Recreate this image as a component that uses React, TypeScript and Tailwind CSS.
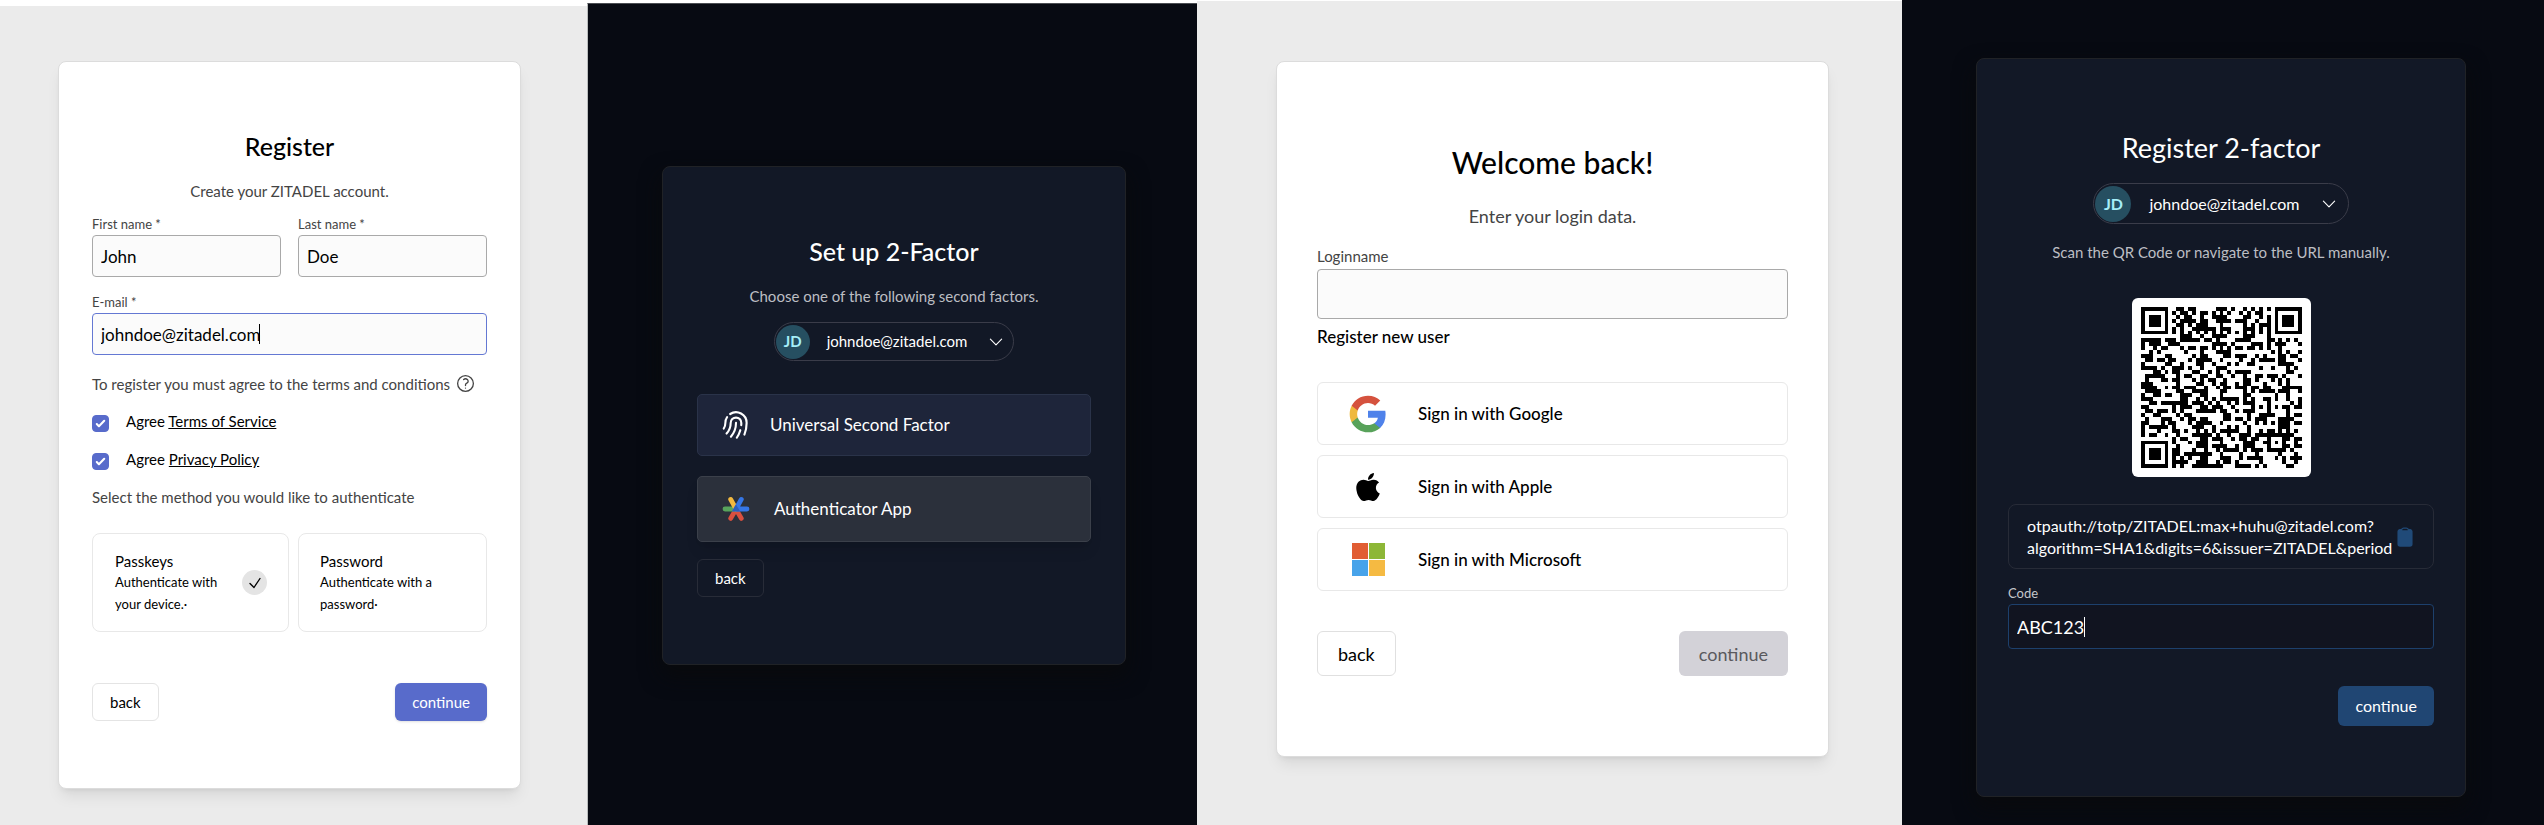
import { useId, useMemo } from "react";
import type { ReactNode } from "react";
import {
  HiClipboard,
  HiOutlineCheck,
  HiOutlineChevronDown,
  HiOutlineFingerPrint,
  HiOutlineQuestionMarkCircle,
} from "react-icons/hi2";
import { FaApple } from "react-icons/fa";

/* ---------- QR code, version 6, error correction level L ---------- */

const QR_SIZE = 41;
const DATA_PER_BLOCK = 68;
const EC_PER_BLOCK = 18;
const FORMAT_BITS = "111110110101010";

function multiply(a: number, b: number): number {
  let z = 0;
  for (let i = 7; i >= 0; i--) {
    z = (z << 1) ^ ((z >>> 7) * 0x11d);
    z ^= ((b >>> i) & 1) * a;
  }
  return z;
}

function errorCorrection(data: number[]): number[] {
  const divisor: number[] = new Array(EC_PER_BLOCK).fill(0);
  divisor[EC_PER_BLOCK - 1] = 1;
  let root = 1;
  for (let i = 0; i < EC_PER_BLOCK; i++) {
    for (let j = 0; j < EC_PER_BLOCK; j++) {
      divisor[j] = multiply(divisor[j], root);
      if (j + 1 < EC_PER_BLOCK) divisor[j] ^= divisor[j + 1];
    }
    root = multiply(root, 2);
  }
  const result: number[] = new Array(EC_PER_BLOCK).fill(0);
  for (const byte of data) {
    const factor = byte ^ (result.shift() as number);
    result.push(0);
    divisor.forEach((d, i) => {
      result[i] ^= multiply(d, factor);
    });
  }
  return result;
}

function encode(text: string): boolean[][] {
  const bits: number[] = [];
  const push = (value: number, length: number) => {
    for (let i = length - 1; i >= 0; i--) bits.push((value >>> i) & 1);
  };
  push(4, 4);
  push(text.length, 8);
  for (const ch of text) push(ch.charCodeAt(0), 8);
  push(0, 4);
  const codewords: number[] = [];
  for (let i = 0; i + 8 <= bits.length; i += 8) {
    codewords.push(parseInt(bits.slice(i, i + 8).join(""), 2));
  }
  for (let pad = 0xec; codewords.length < DATA_PER_BLOCK * 2; pad ^= 0xec ^ 0x11) codewords.push(pad);

  const blocks = [codewords.slice(0, DATA_PER_BLOCK), codewords.slice(DATA_PER_BLOCK, DATA_PER_BLOCK * 2)];
  const corrections = blocks.map(errorCorrection);
  const stream: number[] = [];
  for (let i = 0; i < DATA_PER_BLOCK; i++) blocks.forEach((b) => stream.push(b[i]));
  for (let i = 0; i < EC_PER_BLOCK; i++) corrections.forEach((c) => stream.push(c[i]));

  const modules: boolean[][] = Array.from({ length: QR_SIZE }, () => new Array(QR_SIZE).fill(false));
  const reserved: boolean[][] = Array.from({ length: QR_SIZE }, () => new Array(QR_SIZE).fill(false));
  const set = (x: number, y: number, dark: boolean) => {
    if (x < 0 || y < 0 || x >= QR_SIZE || y >= QR_SIZE) return;
    modules[y][x] = dark;
    reserved[y][x] = true;
  };
  for (let i = 0; i < QR_SIZE; i++) {
    set(6, i, i % 2 === 0);
    set(i, 6, i % 2 === 0);
  }
  for (const [cx, cy] of [[3, 3], [QR_SIZE - 4, 3], [3, QR_SIZE - 4]]) {
    for (let dy = -4; dy <= 4; dy++) {
      for (let dx = -4; dx <= 4; dx++) {
        const d = Math.max(Math.abs(dx), Math.abs(dy));
        set(cx + dx, cy + dy, d !== 2 && d !== 4);
      }
    }
  }
  for (let dy = -2; dy <= 2; dy++) {
    for (let dx = -2; dx <= 2; dx++) set(34 + dx, 34 + dy, Math.max(Math.abs(dx), Math.abs(dy)) !== 1);
  }
  const f = (i: number) => FORMAT_BITS[14 - i] === "1";
  for (let i = 0; i <= 5; i++) set(8, i, f(i));
  set(8, 7, f(6));
  set(8, 8, f(7));
  set(7, 8, f(8));
  for (let i = 9; i < 15; i++) set(14 - i, 8, f(i));
  for (let i = 0; i < 8; i++) set(QR_SIZE - 1 - i, 8, f(i));
  for (let i = 8; i < 15; i++) set(8, QR_SIZE - 15 + i, f(i));
  set(8, QR_SIZE - 8, true);

  let index = 0;
  for (let right = QR_SIZE - 1; right >= 1; right -= 2) {
    if (right === 6) right = 5;
    for (let v = 0; v < QR_SIZE; v++) {
      for (let j = 0; j < 2; j++) {
        const x = right - j;
        const upward = ((right + 1) & 2) === 0;
        const y = upward ? QR_SIZE - 1 - v : v;
        if (reserved[y][x]) continue;
        const bit = index < stream.length * 8 ? (stream[index >>> 3] >>> (7 - (index & 7))) & 1 : 0;
        index++;
        modules[y][x] = (bit === 1) !== (x % 3 === 0);
      }
    }
  }
  return modules;
}

function QrCode({ value }: { value: string }) {
  const path = useMemo(
    () =>
      encode(value)
        .map((row, y) => row.map((dark, x) => (dark ? `M${x} ${y}h1v1h-1z` : "")).join(""))
        .join(""),
    [value],
  );
  return (
    <svg viewBox="0 0 41 41" shapeRendering="crispEdges" role="img" aria-label="QR code" className="block w-full">
      <path d={path} fill="#000" />
    </svg>
  );
}

/* ---------- Logos ---------- */

function GoogleLogo() {
  return (
    <svg viewBox="0 0 24 24" className="size-10" aria-hidden="true">
      <path fill="#4f82ea" d="M22.56 12.25c0-.78-.07-1.53-.2-2.25H12v4.26h5.92c-.26 1.37-1.04 2.53-2.21 3.31v2.77h3.57c2.08-1.92 3.28-4.74 3.28-8.09z" />
      <path fill="#58a25a" d="M12 23c2.97 0 5.46-.98 7.28-2.66l-3.57-2.77c-.98.66-2.23 1.06-3.71 1.06-2.86 0-5.29-1.93-6.16-4.53H2.18v2.84C3.99 20.53 7.7 23 12 23z" />
      <path fill="#efb93d" d="M5.84 14.09c-.22-.66-.35-1.36-.35-2.09s.13-1.43.35-2.09V7.07H2.18C1.43 8.55 1 10.22 1 12s.43 3.45 1.18 4.93l2.85-2.22.81-.62z" />
      <path fill="#d5523e" d="M12 5.38c1.62 0 3.06.56 4.21 1.64l3.15-3.15C17.45 2.09 14.97 1 12 1 7.7 1 3.99 3.47 2.18 7.07l3.66 2.84c.87-2.6 3.3-4.53 6.16-4.53z" />
    </svg>
  );
}

function MicrosoftLogo() {
  return (
    <svg viewBox="0 0 33 33" className="size-[33px]" aria-hidden="true">
      <rect width="16" height="16" fill="#e15d33" />
      <rect x="17" width="16" height="16" fill="#8db737" />
      <rect y="17" width="16" height="16" fill="#47a3ea" />
      <rect x="17" y="17" width="16" height="16" fill="#f5ba42" />
    </svg>
  );
}

function AuthenticatorLogo() {
  return (
    <svg viewBox="0 0 28 26" className="h-[26px] w-7" aria-hidden="true" strokeLinecap="round" strokeWidth="4.8">
      <path d="M14 13.2L8.7 22.4M14 13.2L19.3 22.4" stroke="#d9503f" />
      <path d="M14 13H3" stroke="#58a45c" />
      <path d="M14 13L8.7 3.4" stroke="#f3b93f" />
      <path d="M14 13L19.3 3.4M14 13H25" stroke="#3576e6" />
      <path d="M14 8.4L18.2 15.4H9.8Z" fill="#2c5fbd" />
    </svg>
  );
}

/* ---------- Shared pieces ---------- */

function Field({
  label,
  value,
  large,
  dark,
  active,
}: {
  label: string;
  value?: string;
  large?: "md" | "lg";
  dark?: boolean;
  active?: string;
}) {
  const id = useId();
  const labelSize = large === "lg" ? "text-[15px] leading-5" : "text-[13px] leading-4";
  const inputSize =
    large === "lg" ? "h-[50px] text-lg" : large === "md" ? "h-[45px] text-lg" : "h-[42px] text-[17px]";
  const tone = dark ? "bg-[#111420] text-white" : "bg-[#fbfbfb] text-black";
  const border = !active ? "border-[#a9a9a9]" : dark ? "border-[#1d406c]" : "border-[#6478d3]";
  return (
    <div className="flex min-w-0 flex-1 flex-col gap-[3px]">
      <label htmlFor={id} className={`${labelSize} ${dark ? "text-[#c5c7cb]" : "text-[#444]"}`}>
        {label}
      </label>
      <div className="relative">
        <input
          id={id}
          defaultValue={value}
          className={`block w-full rounded-[4px] border px-2 outline-none ${inputSize} ${tone} ${border}`}
        />
        {active && <span className={`absolute top-1/2 h-5 w-px -translate-y-1/2 ${active}`} />}
      </div>
    </div>
  );
}

function AccountPill({ large }: { large?: boolean }) {
  return (
    <button
      type="button"
      className={`flex items-center self-center rounded-full border border-[#3a3c49] pl-px text-white ${
        large ? "mt-[19px] h-[41px] pr-2.5" : "mt-4 h-[39px] pr-2"
      }`}
    >
      <span
        className={`flex items-center justify-center rounded-full bg-[#264f61] font-bold text-[#a5eef8] ${
          large ? "size-9 text-base" : "size-[34px] text-[15px]"
        }`}
      >
        JD
      </span>
      <span className={large ? "mr-5 ml-[18px] text-base" : "mr-5 ml-[17px] text-[15px]"}>johndoe@zitadel.com</span>
      <HiOutlineChevronDown className="size-[18px]" />
    </button>
  );
}

function Terms({ children }: { children: ReactNode }) {
  const id = useId();
  return (
    <div className="flex h-5 items-end gap-[17px]">
      <span className="relative size-[17px]">
        <input
          id={id}
          type="checkbox"
          defaultChecked
          className="peer block size-[17px] appearance-none rounded border border-[#c4c4c4] checked:border-[#586bcb] checked:bg-[#586bcb]"
        />
        <svg
          viewBox="0 0 16 16"
          className="pointer-events-none absolute inset-0 hidden size-[17px] peer-checked:block"
          fill="#fff"
          aria-hidden="true"
        >
          <path d="M12.207 4.793a1 1 0 010 1.414l-5 5a1 1 0 01-1.414 0l-2-2a1 1 0 011.414-1.414L6.5 9.086l4.293-4.293a1 1 0 011.414 0z" />
        </svg>
      </span>
      <label htmlFor={id} className="mb-px text-[15px] leading-5 text-black">
        Agree{" "}
        <a href="#terms" className="underline">
          {children}
        </a>
      </label>
    </div>
  );
}

function ProviderButton({ icon, children }: { icon: ReactNode; children: ReactNode }) {
  return (
    <button
      type="button"
      className="flex h-[63px] items-center rounded-md border border-[#e8e8e8] bg-white pl-7 text-[17px] font-medium text-black"
    >
      <span className="mr-7 flex w-11 justify-center">{icon}</span>
      {children}
    </button>
  );
}

const lightCard =
  "flex flex-col rounded-lg border border-[#dcdcdc] bg-white shadow-[0_10px_15px_-3px_rgba(0,0,0,0.08),0_4px_6px_-4px_rgba(0,0,0,0.1)]";
const darkCard = "flex flex-col rounded-lg border border-[#202226] bg-[#121826] shadow-[0_10px_20px_2px_#090a0d]";

/* ---------- Screens ---------- */

function RegisterScreen() {
  return (
    <section className="mt-1.5 bg-[#ebebeb] pt-[55px] pr-[66px] pl-[58px]">
      <form className={`${lightCard} px-[33px] pt-[68px] pb-[67px]`}>
        <h1 className="text-center text-[25px] leading-8 font-medium text-black">Register</h1>
        <p className="mt-[19px] text-center text-[15px] leading-5 text-[#444]">Create your ZITADEL account.</p>
        <div className="mt-[15px] flex gap-[17px]">
          <Field label="First name *" value="John" />
          <Field label="Last name *" value="Doe" />
        </div>
        <div className="mt-[17px] flex">
          <Field label="E-mail *" value="johndoe@zitadel.com" active="left-[167px] bg-black" />
        </div>
        <p className="mt-[18px] flex items-center gap-[5px] text-[15px] leading-5 text-[#444]">
          To register you must agree to the terms and conditions
          <HiOutlineQuestionMarkCircle className="size-[21px]" />
        </p>
        <div className="mt-[18px] flex flex-col gap-[18px]">
          <Terms>Terms of Service</Terms>
          <Terms>Privacy Policy</Terms>
        </div>
        <p className="mt-[17px] text-[15px] leading-5 text-[#444]">Select the method you would like to authenticate</p>
        <div className="mt-[26px] grid grid-cols-[197fr_189fr] gap-[9px]">
          <button
            type="button"
            className="flex h-[99px] items-center justify-between rounded-lg border border-[#e8e8e8] pr-[21px] pl-[22px] text-left text-black"
          >
            <span>
              <span className="block text-[15px] leading-5">Passkeys</span>
              <span className="block text-[13px] leading-[22px]">
                Authenticate with
                <br />
                your device.·
              </span>
            </span>
            <span className="flex size-[25px] items-center justify-center rounded-full bg-[#e4e4e4]">
              <HiOutlineCheck className="size-4 stroke-2" />
            </span>
          </button>
          <button
            type="button"
            className="flex h-[99px] items-center rounded-lg border border-[#e8e8e8] pl-[21px] text-left text-black"
          >
            <span>
              <span className="block text-[15px] leading-5">Password</span>
              <span className="block text-[13px] leading-[22px]">
                Authenticate with a
                <br />
                password·
              </span>
            </span>
          </button>
        </div>
        <div className="mt-[51px] flex justify-between text-[15px]">
          <button type="button" className="h-[38px] rounded-md border border-[#e4e4e4] px-[17px] text-black">
            back
          </button>
          <button type="button" className="h-[38px] rounded-md bg-[#586bcb] px-[17px] text-white shadow-sm">
            continue
          </button>
        </div>
      </form>
    </section>
  );
}

function SetUpScreen() {
  return (
    <section className="mt-[3px] border-t border-l border-t-[#4a4d52] border-l-[#b9bcbc] bg-[#070a12] pt-[162px] pr-[71px] pl-[74px]">
      <form className={`${darkCard} px-[34px] pt-[68px] pb-[67px]`}>
        <h1 className="text-center text-[25px] leading-8 font-medium text-white">Set up 2-Factor</h1>
        <p className="mt-[19px] text-center text-[15px] leading-5 text-[#bcbec3]">
          Choose one of the following second factors.
        </p>
        <AccountPill />
        <button
          type="button"
          className="mt-[33px] flex h-[62px] items-center rounded-[5px] border border-[#2a3349] bg-[#1e253a] pl-[21px] text-[17px] text-white"
        >
          <HiOutlineFingerPrint className="mr-[17px] size-[34px]" />
          Universal Second Factor
        </button>
        <button
          type="button"
          className="mt-5 flex h-[66px] items-center rounded-[5px] border border-[#3b404a] bg-[#2b303b] pl-6 text-[17px] text-white shadow-lg"
        >
          <span className="mr-6">
            <AuthenticatorLogo />
          </span>
          Authenticator App
        </button>
        <button
          type="button"
          className="mt-[17px] h-[38px] self-start rounded-md border border-[#282c38] px-[17px] text-[15px] text-white"
        >
          back
        </button>
      </form>
    </section>
  );
}

function LoginScreen() {
  return (
    <section className="mt-px bg-[#ebebeb] pt-[60px] pr-[73px] pl-[79px]">
      <form className={`${lightCard} px-10 pt-[82px] pb-20`}>
        <h1 className="text-center text-[30px] leading-9 font-medium text-black">Welcome back!</h1>
        <p className="mt-6 text-center text-lg leading-6 text-[#444]">Enter your login data.</p>
        <div className="mt-[18px] flex">
          <Field label="Loginname" large="lg" />
        </div>
        <a href="#register" className="mt-1.5 self-start text-[17px] leading-6 font-medium text-black">
          Register new user
        </a>
        <div className="mt-[33px] flex flex-col gap-2.5">
          <ProviderButton icon={<GoogleLogo />}>Sign in with Google</ProviderButton>
          <ProviderButton icon={<FaApple className="size-8" />}>Sign in with Apple</ProviderButton>
          <ProviderButton icon={<MicrosoftLogo />}>Sign in with Microsoft</ProviderButton>
        </div>
        <div className="mt-10 flex justify-between text-lg">
          <button type="button" className="h-[45px] rounded-md border border-[#e0e0e0] px-5 text-black">
            back
          </button>
          <button type="button" className="h-[45px] rounded-md bg-[#d3d2d8] px-5 text-[#5a5a5e]">
            continue
          </button>
        </div>
      </form>
    </section>
  );
}

function ScanScreen() {
  return (
    <section className="bg-[#070a12] pt-[58px] pr-[78px] pb-6 pl-[74px]">
      <form className={`${darkCard} px-[31px] pt-[73px] pb-[70px]`}>
        <h1 className="text-center text-[27px] leading-8 text-white">Register 2-factor</h1>
        <AccountPill large />
        <p className="mt-4 text-center text-[15px] leading-6 text-[#bcbec3]">
          Scan the QR Code or navigate to the URL manually.
        </p>
        <div className="mt-[34px] w-[179px] self-center rounded-md bg-white p-[9px]">
          <QrCode value="otpauth://totp/ZITADEL:max+huhu@zitadel.com?algorithm=SHA1&digits=6&issuer=ZITADEL&period=30&secret=ABCDEFGHIJKLMNOPQRSTUVWXYZ234567" />
        </div>
        <div className="mt-[27px] flex h-[65px] items-center justify-between rounded-lg border border-[#272b37] pr-[17px] pl-[18px]">
          <p className="text-base leading-[22px] text-white">
            otpauth://totp/ZITADEL:max+huhu@zitadel.com?
            <br />
            algorithm=SHA1&amp;digits=6&amp;issuer=ZITADEL&amp;period
          </p>
          <button type="button" aria-label="Copy URL" className="text-[#204a78]">
            <HiClipboard className="size-[22px]" />
          </button>
        </div>
        <div className="mt-4 flex">
          <Field label="Code" value="ABC123" large="md" dark active="left-[76px] bg-white" />
        </div>
        <button
          type="button"
          className="mt-[37px] h-10 self-end rounded-md bg-[#204673] px-[17px] text-base text-white"
        >
          continue
        </button>
      </form>
    </section>
  );
}

export default function App() {
  return (
    <main className="grid min-h-screen grid-cols-[587fr_610fr_705fr_642fr] bg-white font-['Lato',sans-serif]">
      <RegisterScreen />
      <SetUpScreen />
      <LoginScreen />
      <ScanScreen />
    </main>
  );
}
